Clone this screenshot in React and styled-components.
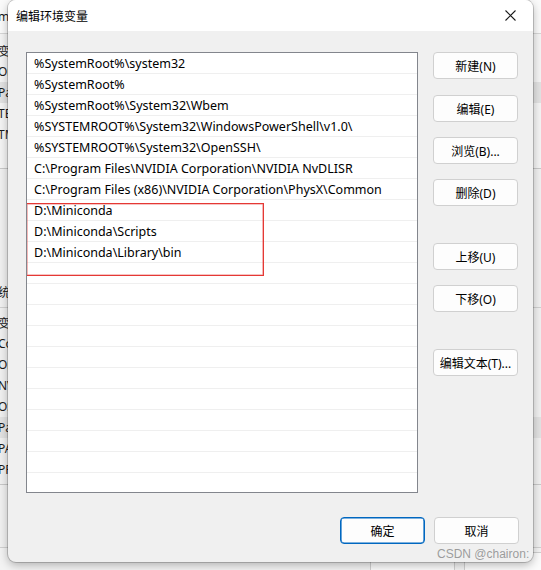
import styled, { createGlobalStyle } from 'styled-components';

const GlobalStyle = createGlobalStyle`
  body {
    margin: 0;
    font-family: "Noto Sans", "Noto Sans CJK SC", sans-serif;
    background: #f0f0f0;
  }
`;

const paths = [
  '%SystemRoot%\\system32',
  '%SystemRoot%',
  '%SystemRoot%\\System32\\Wbem',
  '%SYSTEMROOT%\\System32\\WindowsPowerShell\\v1.0\\',
  '%SYSTEMROOT%\\System32\\OpenSSH\\',
  'C:\\Program Files\\NVIDIA Corporation\\NVIDIA NvDLISR',
  'C:\\Program Files (x86)\\NVIDIA Corporation\\PhysX\\Common',
  'D:\\Miniconda',
  'D:\\Miniconda\\Scripts',
  'D:\\Miniconda\\Library\\bin',
];

const rows = [...paths, ...Array(11).fill('')];

const sideButtons = [
  { label: '新建(N)', gap: 0 },
  { label: '编辑(E)', gap: 16 },
  { label: '浏览(B)...', gap: 15 },
  { label: '删除(D)', gap: 15 },
  { label: '上移(U)', gap: 37 },
  { label: '下移(O)', gap: 15 },
  { label: '编辑文本(T)...', gap: 37 },
];

const userVars = [
  { name: '变' },
  { name: 'Or' },
  { name: 'Pa', selected: true },
  { name: 'TE' },
  { name: 'TM' },
];

const systemVars = [
  { name: '变' },
  { name: 'Co' },
  { name: 'Or' },
  { name: 'NV' },
  { name: 'OS' },
  { name: 'Pa', selected: true },
  { name: 'PA' },
  { name: 'PR' },
];

export default function App() {
  return (
    <>
      <GlobalStyle />
      <Desktop>
        <BackWindow>
          <BackHeader>
            <BackText>m</BackText>
          </BackHeader>
          <BackTable $height={135}>
            {userVars.map((v, i) => (
              <BackRow key={i} $selected={v.selected}>
                <BackText>{v.name}</BackText>
              </BackRow>
            ))}
          </BackTable>
          <BackHeading>
            <BackText>统</BackText>
          </BackHeading>
          <BackTable $height={178} $top>
            {systemVars.map((v, i) => (
              <BackRow key={i} $selected={v.selected}>
                <BackText>{v.name}</BackText>
              </BackRow>
            ))}
          </BackTable>
          <BackFooter>
            <BackButton />
            <BackButton />
          </BackFooter>
        </BackWindow>

        <Dialog>
          <TitleBar>
            <Title>编辑环境变量</Title>
            <CloseButton>
              <svg width="11" height="11" viewBox="0 0 11 11">
                <path d="M0.5 0.5 L10.5 10.5 M10.5 0.5 L0.5 10.5" stroke="#1a1a1a" strokeWidth="1.1" fill="none" />
              </svg>
            </CloseButton>
          </TitleBar>
          <Body>
            <Main>
              <PathList>
                {rows.map((p, i) => (
                  <PathRow key={i}>{p}</PathRow>
                ))}
                <Highlight />
              </PathList>
              <SideColumn>
                {sideButtons.map((b) => (
                  <Button key={b.label} $gap={b.gap}>{b.label}</Button>
                ))}
              </SideColumn>
            </Main>
            <Footer>
              <Button $primary>确定</Button>
              <Button>取消</Button>
            </Footer>
          </Body>
        </Dialog>

        <Watermark>CSDN @chairon:</Watermark>
      </Desktop>
    </>
  );
}

const Desktop = styled.div`
  position: relative;
  width: 541px;
  height: 570px;
  overflow: hidden;
  background: #f0f0f0;
`;

const BackWindow = styled.div`
  position: absolute;
  inset: 0;
  display: flex;
  flex-direction: column;
  background: #f0f0f0;
  font-size: 12px;
  color: #1a1a1a;
`;

const BackHeader = styled.div`
  height: 33px;
  display: flex;
  align-items: center;
  background: #fafafa;
  border-bottom: 1px solid #d6d6d6;
`;

const BackText = styled.span`
  margin-left: -2px;
  white-space: nowrap;
`;

const BackTable = styled.div`
  height: ${(p) => p.$height}px;
  padding-top: ${(p) => (p.$top ? 4 : 6)}px;
  box-sizing: border-box;
  background: ${(p) => (p.$top ? '#f0f0f0' : '#f4f4f4')};
  border-bottom: 1px solid #c8c8c8;
  border-top: ${(p) => (p.$top ? '1px solid #d0d0d0' : 'none')};
`;

const BackRow = styled.div`
  height: 21px;
  display: flex;
  align-items: center;
  background: ${(p) => (p.$selected ? '#e2e2e2' : 'transparent')};
`;

const BackHeading = styled.div`
  height: 138px;
  display: flex;
  align-items: flex-end;
  padding-bottom: 6px;
  box-sizing: border-box;
`;

const BackFooter = styled.div`
  margin-top: auto;
  height: 23px;
  display: flex;
  gap: 9px;
  padding-left: 370px;
  padding-top: 4px;
  box-sizing: border-box;
  border-top: 1px solid #d0d0d0;
  background: #f3f3f3;
`;

const BackButton = styled.div`
  flex: none;
  width: 85px;
  height: 27px;
  box-sizing: border-box;
  border: 1px solid #cfcfcf;
  border-radius: 4px;
  background: #fbfbfb;
`;

const Dialog = styled.div`
  position: absolute;
  left: 8px;
  top: 0;
  width: 525px;
  height: 562px;
  display: flex;
  flex-direction: column;
  border-radius: 8px;
  overflow: hidden;
  background: #f0f0f0;
  box-shadow: 0 0 0 1px rgba(0, 0, 0, 0.18), 0 3px 10px rgba(0, 0, 0, 0.28);
`;

const TitleBar = styled.div`
  height: 31px;
  flex: none;
  display: flex;
  align-items: center;
  justify-content: space-between;
  background: #ffffff;
  padding-left: 8px;
`;

const Title = styled.div`
  font-family: "Noto Sans CJK SC", sans-serif;
  font-size: 12px;
  color: #000;
`;

const CloseButton = styled.div`
  width: 46px;
  height: 31px;
  display: flex;
  align-items: center;
  justify-content: center;
`;

const Body = styled.div`
  flex: 1;
  display: flex;
  flex-direction: column;
  padding: 21px 14px 0 18px;
`;

const Main = styled.div`
  display: flex;
  gap: 15px;
`;

const PathList = styled.div`
  position: relative;
  width: 392px;
  height: 441px;
  box-sizing: border-box;
  border: 1px solid #83868d;
  background: #ffffff;
  overflow: hidden;
`;

const PathRow = styled.div`
  height: 21px;
  box-sizing: border-box;
  border-bottom: 1px solid #efefef;
  padding: 1px 0 0 7px;
  display: flex;
  align-items: center;
  font-size: 12.5px;
  color: #000;
  white-space: nowrap;
`;

const Highlight = styled.div`
  position: absolute;
  left: -1px;
  top: 150px;
  width: 238px;
  height: 73px;
  box-sizing: border-box;
  border: 1px solid #e53935;
  box-shadow: inset 0 0 0 0.6px rgba(229, 57, 53, 0.6);
`;

const SideColumn = styled.div`
  display: flex;
  flex-direction: column;
  width: 85px;
`;

const Button = styled.div`
  flex: none;
  width: 85px;
  height: 27px;
  margin-top: ${(p) => p.$gap || 0}px;
  box-sizing: border-box;
  display: flex;
  align-items: center;
  justify-content: center;
  border: 1px solid ${(p) => (p.$primary ? '#0067c0' : '#d0d0d0')};
  box-shadow: ${(p) => (p.$primary ? 'inset 0 0 0 0.6px #0067c0' : 'none')};
  border-radius: 4px;
  background: #fdfdfd;
  font-size: 12px;
  color: #000;
  white-space: nowrap;
`;

const Footer = styled.div`
  display: flex;
  justify-content: flex-end;
  gap: 9px;
  margin-top: 24px;
`;

const Watermark = styled.div`
  position: absolute;
  left: 437px;
  top: 547px;
  font-family: "Liberation Sans", sans-serif;
  font-size: 12px;
  color: rgba(140, 140, 140, 0.85);
  white-space: nowrap;
`;
